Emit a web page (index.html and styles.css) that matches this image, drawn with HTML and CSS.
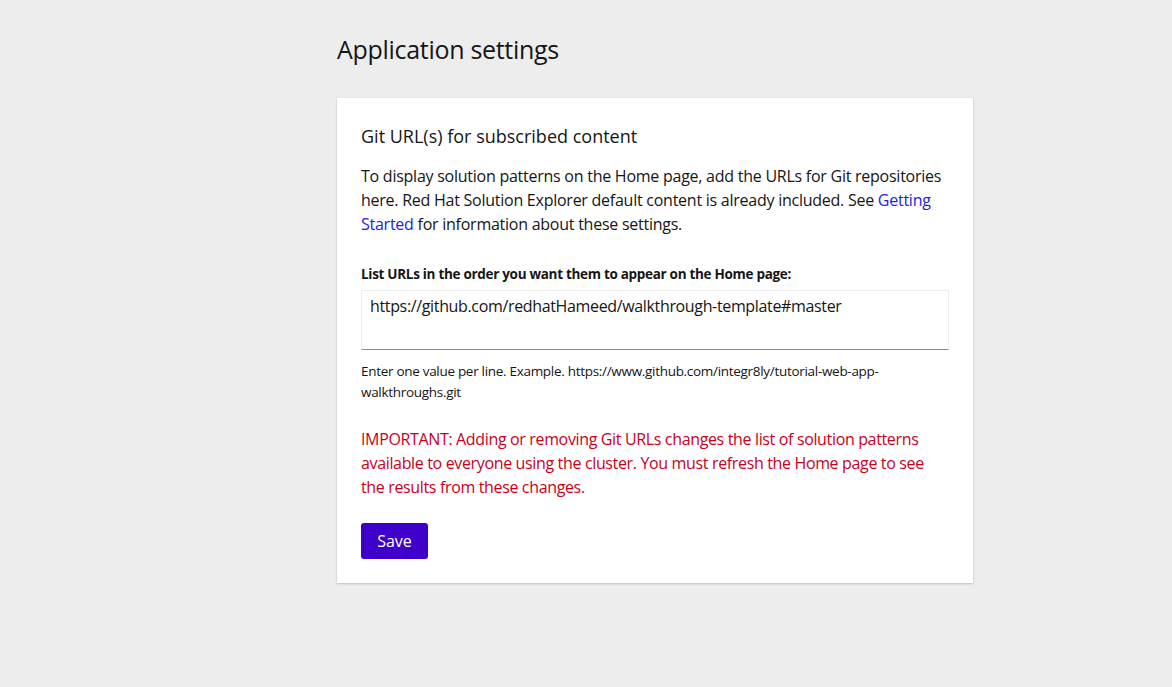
FILE: index.html
```html
<!DOCTYPE html>
<html lang="en">
<head>
<meta charset="utf-8">
<title>Application settings</title>
<link rel="stylesheet" href="styles.css">
</head>
<body>
<main class="page">
  <h1 class="page-title">Application settings</h1>
  <section class="card">
    <h2 class="card-title">Git URL(s) for subscribed content</h2>
    <p class="intro">To display solution patterns on the Home page, add the URLs for Git repositories here. Red Hat Solution Explorer default content is already included. See <a href="#" class="link">Getting Started</a> for information about these settings.</p>
    <form class="form">
      <label class="label" for="urls">List URLs in the order you want them to appear on the Home page:</label>
      <textarea id="urls" class="textarea">https://github.com/redhatHameed/walkthrough-template#master</textarea>
      <p class="helper">Enter one value per line. Example. https://www.github.com/integr8ly/tutorial-web-app-walkthroughs.git</p>
      <p class="important">IMPORTANT: Adding or removing Git URLs changes the list of solution patterns available to everyone using the cluster. You must refresh the Home page to see the results from these changes.</p>
      <button type="button" class="btn">Save</button>
    </form>
  </section>
</main>
</body>
</html>
```

FILE: styles.css
```css
* { box-sizing: border-box; }
html, body { margin: 0; padding: 0; }
body {
  background: #ededed;
  font-family: "Open Sans", "Noto Sans", sans-serif;
  color: #151515;
  width: 1172px;
  height: 687px;
}
.page {
  width: 636px;
  margin-left: 337px;
  padding-top: 32px;
}
.page-title {
  margin: 0 0 32px 0;
  font-size: 25px;
  font-weight: 400;
  line-height: 34px;
  letter-spacing: -0.3px;
}
.card {
  background: #fff;
  padding: 24px 24px 24px 24px;
  box-shadow: 0 1px 2px rgba(3,3,3,0.18), 0 0 1px rgba(3,3,3,0.1);
}
.card-title {
  margin: 0 0 14px 0;
  font-size: 18px;
  font-weight: 500;
  line-height: 28px;
  letter-spacing: 0;
}
.intro {
  margin: 0 0 28px 0;
  font-size: 16px;
  line-height: 24px;
  letter-spacing: -0.25px;
}
.link { color: #2222dd; text-decoration: none; }
.form { display: flex; flex-direction: column; align-items: flex-start; }
.label {
  font-size: 13.5px;
  font-weight: 700;
  line-height: 20px;
  letter-spacing: -0.3px;
  margin-bottom: 6px;
}
.textarea {
  width: 588px;
  height: 60px;
  resize: none;
  border: 1px solid #ededed;
  border-bottom: 1px solid #8a8d90;
  padding: 3px 8px;
  font-family: inherit;
  font-size: 16px;
  line-height: 24px;
  color: #151515;
  letter-spacing: -0.35px;
  outline: none;
}
.helper {
  margin: 11px 0 0 0;
  font-size: 13.5px;
  line-height: 21px;
  letter-spacing: -0.3px;
}
.important {
  margin: 24px 0 0 0;
  color: #c9001b;
  font-size: 16px;
  line-height: 24px;
  letter-spacing: -0.35px;
}
.btn {
  margin-top: 24px;
  width: 67px;
  height: 36px;
  background: #4000cc;
  color: #fff;
  border: none;
  border-radius: 3px;
  font-family: inherit;
  font-size: 16px;
  padding: 0;
}
```
